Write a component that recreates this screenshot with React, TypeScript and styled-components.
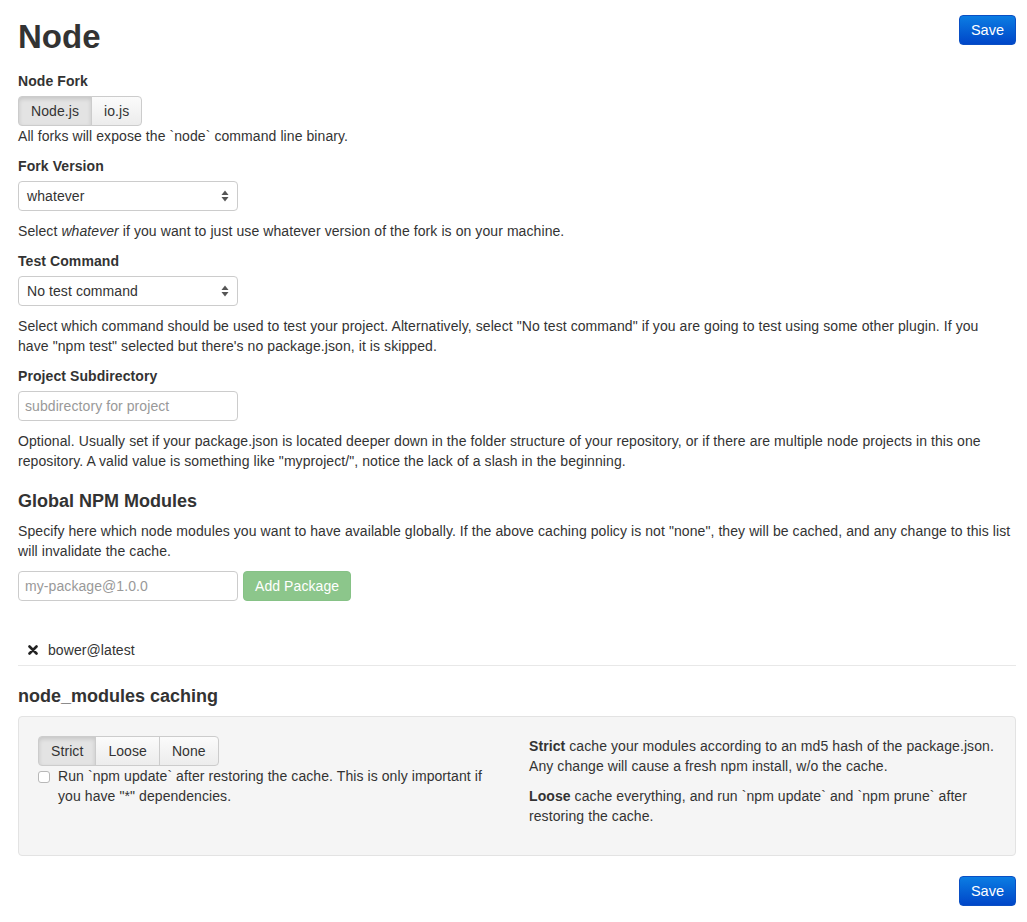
import React, { useState } from "react";
import styled, { createGlobalStyle, css } from "styled-components";

const GlobalStyle = createGlobalStyle`
  body {
    margin: 0;
    background: #fff;
    color: #333;
    font-family: "Liberation Sans", Arial, sans-serif;
    font-size: 14px;
    line-height: 20px;
    letter-spacing: 0.08px;
  }
  * { box-sizing: border-box; }
`;

const Page = styled.div`
  padding: 15px 11px 16px 18px;
`;

const Header = styled.div`
  display: flex;
  justify-content: space-between;
  align-items: flex-start;
`;

const Title = styled.h1`
  margin: 2px 0 0;
  font-size: 33px;
  line-height: 40px;
  font-weight: bold;
  letter-spacing: 0;
`;

const SaveButton = styled.button`
  font-family: inherit;
  font-size: 14.5px;
  line-height: 20px;
  color: #fff;
  padding: 4px 11px;
  height: 30px;
  border: 1px solid #0a4fc4;
  border-radius: 4px;
  background: linear-gradient(#0b7de3, #0046c8);
  cursor: pointer;
`;

const Footer = styled.div`
  display: flex;
  justify-content: flex-end;
  margin-top: 20px;
`;

const FormGroup = styled.div`
  margin-top: 14px;
  & + & {
    margin-top: 10px;
  }
`;

const Label = styled.div`
  font-weight: bold;
  margin-bottom: 5px;
`;

const Help = styled.p<{ $gap?: boolean }>`
  margin: ${(p) => (p.$gap ? "10px" : "0")} 0 0;
`;

const BtnGroup = styled.div`
  display: inline-flex;
  vertical-align: top;
`;

const GroupButton = styled.button<{ $active?: boolean }>`
  font-family: inherit;
  font-size: 14px;
  line-height: 20px;
  letter-spacing: 0.08px;
  color: #333;
  height: 30px;
  padding: 4px 12px;
  border: 1px solid #ccc;
  background: linear-gradient(#fbfbfb, #ececec);
  cursor: pointer;
  & + & {
    margin-left: -1px;
  }
  &:first-child {
    border-radius: 4px 0 0 4px;
  }
  &:last-child {
    border-radius: 0 4px 4px 0;
  }
  ${(p) =>
    p.$active &&
    css`
      background: #e3e3e3;
      box-shadow: inset 0 2px 4px rgba(0, 0, 0, 0.13);
    `}
`;

const SelectBox = styled.div`
  width: 220px;
  height: 30px;
  display: flex;
  align-items: center;
  justify-content: space-between;
  padding: 0 8px 0 8px;
  border: 1px solid #ccc;
  border-radius: 4px;
  background: #fff;
`;

const TextInput = styled.input`
  width: 220px;
  height: 30px;
  padding: 4px 6px;
  font-family: inherit;
  font-size: 14px;
  letter-spacing: 0.08px;
  color: #333;
  border: 1px solid #ccc;
  border-radius: 4px;
  outline: none;
  &::placeholder {
    color: #999;
  }
`;

const SectionTitle = styled.h4<{ $top: number }>`
  margin: ${(p) => p.$top}px 0 10px;
  font-size: 18px;
  line-height: 20px;
  font-weight: bold;
  letter-spacing: 0;
`;

const InlineRow = styled.div`
  display: flex;
  gap: 5px;
  margin-top: 10px;
`;

const AddButton = styled.button`
  font-family: inherit;
  font-size: 14px;
  line-height: 20px;
  letter-spacing: 0.08px;
  color: #fff;
  height: 30px;
  padding: 4px 11px;
  border: 1px solid #86c286;
  border-radius: 4px;
  background: #8cc68b;
`;

const PackageList = styled.ul`
  list-style: none;
  margin: 29px 0 0;
  padding: 0;
`;

const PackageItem = styled.li`
  display: flex;
  align-items: center;
  gap: 10px;
  padding: 10px 10px 5px;
  border-bottom: 1px solid #e8e8e8;
`;

const Well = styled.div`
  display: grid;
  grid-template-columns: 450px 1fr;
  column-gap: 41px;
  padding: 19px;
  background: #f5f5f5;
  border: 1px solid #e3e3e3;
  border-radius: 4px;
`;

const CheckRow = styled.label`
  display: flex;
  align-items: flex-start;
  gap: 8px;
`;

const CheckBox = styled.span`
  flex: none;
  width: 12px;
  height: 12px;
  margin-top: 5px;
  border: 1px solid #b8b8b8;
  border-radius: 3px;
  background: #fff;
`;

const Para = styled.p`
  margin: 0 0 10px;
`;

const SelectArrows = () => (
  <svg width="8" height="12" viewBox="0 0 8 12">
    <path d="M4 0.5 L7.5 5 H0.5 Z" fill="#555" />
    <path d="M4 11.5 L7.5 7 H0.5 Z" fill="#555" />
  </svg>
);

const RemoveIcon = () => (
  <svg width="10" height="10" viewBox="0 0 10 10">
    <path d="M1.5 1.5 L8.5 8.5 M8.5 1.5 L1.5 8.5" stroke="#222" strokeWidth="2.6" strokeLinecap="round" />
  </svg>
);

export default function App() {
  const [fork, setFork] = useState("node");
  const [caching, setCaching] = useState("strict");

  return (
    <Page>
      <GlobalStyle />
      <Header>
        <Title>Node</Title>
        <SaveButton>Save</SaveButton>
      </Header>

      <FormGroup>
        <Label>Node Fork</Label>
        <BtnGroup>
          <GroupButton $active={fork === "node"} onClick={() => setFork("node")}>Node.js</GroupButton>
          <GroupButton $active={fork === "io"} onClick={() => setFork("io")}>io.js</GroupButton>
        </BtnGroup>
        <Help>All forks will expose the `node` command line binary.</Help>
      </FormGroup>

      <FormGroup>
        <Label>Fork Version</Label>
        <SelectBox>
          <span>whatever</span>
          <SelectArrows />
        </SelectBox>
        <Help $gap>
          Select <em>whatever</em> if you want to just use whatever version of the fork is on your machine.
        </Help>
      </FormGroup>

      <FormGroup>
        <Label>Test Command</Label>
        <SelectBox>
          <span>No test command</span>
          <SelectArrows />
        </SelectBox>
        <Help $gap>
          Select which command should be used to test your project. Alternatively, select "No test command" if you are
          going to test using some other plugin. If you have{"\u00a0"}"npm test" selected but there's no package.json, it
          is skipped.
        </Help>
      </FormGroup>

      <FormGroup>
        <Label>Project Subdirectory</Label>
        <TextInput placeholder="subdirectory for project" />
        <Help $gap>
          Optional. Usually set if your package.json is located deeper down in the folder structure of your
          repository, or if there are multiple node projects in this one repository. A valid value is something like
          "myproject/", notice the lack of a slash in the beginning.
        </Help>
      </FormGroup>

      <SectionTitle $top={20}>Global NPM Modules</SectionTitle>
      <Help>
        Specify here which node modules you want to have available globally. If the above caching policy is not
        "none", they will be cached, and any change to this list will invalidate the cache.
      </Help>
      <InlineRow>
        <TextInput placeholder="my-package@1.0.0" />
        <AddButton disabled>Add Package</AddButton>
      </InlineRow>
      <PackageList>
        <PackageItem>
          <RemoveIcon />
          <span>bower@latest</span>
        </PackageItem>
      </PackageList>

      <SectionTitle $top={20}>node_modules caching</SectionTitle>
      <Well>
        <div>
          <BtnGroup>
            <GroupButton $active={caching === "strict"} onClick={() => setCaching("strict")}>Strict</GroupButton>
            <GroupButton $active={caching === "loose"} onClick={() => setCaching("loose")}>Loose</GroupButton>
            <GroupButton $active={caching === "none"} onClick={() => setCaching("none")}>None</GroupButton>
          </BtnGroup>
          <CheckRow>
            <CheckBox />
            <span>Run `npm update` after restoring the cache. This is only important if you have "*" dependencies.</span>
          </CheckRow>
        </div>
        <div>
          <Para>
            <b>Strict</b> cache your modules according to an md5 hash of the package.json. Any change will cause a fresh
            npm install, w/o the cache.
          </Para>
          <Para>
            <b>Loose</b> cache everything, and run `npm update` and `npm prune` after restoring the cache.
          </Para>
        </div>
      </Well>

      <Footer>
        <SaveButton>Save</SaveButton>
      </Footer>
    </Page>
  );
}
